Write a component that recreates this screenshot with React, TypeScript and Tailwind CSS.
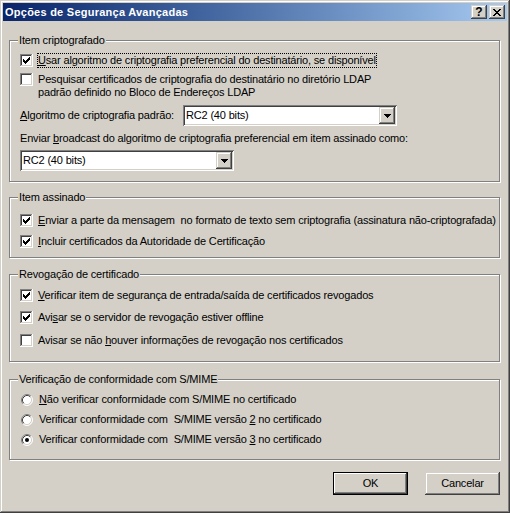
import React from "react";

function CheckBox({ checked }: { checked?: boolean }) {
  return (
    <svg width="13" height="13" viewBox="0 0 13 13" shapeRendering="crispEdges" className="shrink-0">
      <rect width="13" height="13" fill="#fff" />
      <rect width="12" height="1" fill="#808080" />
      <rect width="1" height="12" fill="#808080" />
      <rect x="1" y="1" width="10" height="1" fill="#404040" />
      <rect x="1" y="1" width="1" height="10" fill="#404040" />
      <rect x="1" y="11" width="11" height="1" fill="#d4d0c8" />
      <rect x="11" y="1" width="1" height="11" fill="#d4d0c8" />
      {checked &&
        [5, 6, 7, 6, 5, 4, 3].map((y, i) => (
          <rect key={i} x={3 + i} y={y} width="1" height="3" fill="#000" />
        ))}
    </svg>
  );
}

function Radio({ checked }: { checked?: boolean }) {
  return (
    <svg width="12" height="12" viewBox="0 0 12 12" className="shrink-0">
      <circle cx="6" cy="6" r="5" fill="#fff" />
      <path d="M2.11 9.89 A5.5 5.5 0 0 1 9.89 2.11" stroke="#808080" fill="none" />
      <path d="M9.89 2.11 A5.5 5.5 0 0 1 2.11 9.89" stroke="#fff" fill="none" />
      <path d="M2.82 9.18 A4.5 4.5 0 0 1 9.18 2.82" stroke="#404040" fill="none" />
      <path d="M9.18 2.82 A4.5 4.5 0 0 1 2.82 9.18" stroke="#d4d0c8" fill="none" />
      {checked && <circle cx="6" cy="6" r="2" fill="#000" />}
    </svg>
  );
}

function Select({ value }: { value: string }) {
  return (
    <div className="flex h-[21px] w-[214px] items-center bg-white p-[2px] shadow-[inset_1px_1px_0_#808080,inset_-1px_-1px_0_#fff,inset_2px_2px_0_#404040,inset_-2px_-2px_0_#d4d0c8]">
      <span className="flex-1 pl-[1px] leading-[13px]">{value}</span>
      <div className="flex h-[17px] w-[16px] items-center justify-center bg-[#d4d0c8] shadow-[inset_-1px_-1px_0_#404040,inset_1px_1px_0_#d4d0c8,inset_-2px_-2px_0_#808080,inset_2px_2px_0_#fff]">
        <svg width="7" height="4" viewBox="0 0 7 4" shapeRendering="crispEdges">
          <rect x="0" y="0" width="7" height="1" fill="#000" />
          <rect x="1" y="1" width="5" height="1" fill="#000" />
          <rect x="2" y="2" width="3" height="1" fill="#000" />
          <rect x="3" y="3" width="1" height="1" fill="#000" />
        </svg>
      </div>
    </div>
  );
}

function Group({ title, className, children }: { title: string; className: string; children: React.ReactNode }) {
  return (
    <div className={`flex flex-col border border-[#808080] shadow-[inset_1px_1px_0_#fff,1px_1px_0_#fff] ${className}`}>
      <div className="-mt-[8px] ml-[8px] w-fit bg-[#d4d0c8] px-[1px] leading-[14px]">{title}</div>
      {children}
    </div>
  );
}

function CheckRow({ checked, focus, className, children }: { checked?: boolean; focus?: boolean; className: string; children: React.ReactNode }) {
  return (
    <div className={`flex h-[17px] items-center pl-[10px] ${className}`}>
      <CheckBox checked={checked} />
      <span className={`ml-[4px] whitespace-nowrap border leading-[13px] ${focus ? "border-dotted border-black" : "border-transparent"}`}>{children}</span>
    </div>
  );
}

function RadioRow({ checked, className, children }: { checked?: boolean; className: string; children: React.ReactNode }) {
  return (
    <div className={`flex h-[17px] items-center pl-[11px] ${className}`}>
      <Radio checked={checked} />
      <span className="ml-[5px] whitespace-nowrap border border-transparent leading-[13px]">{children}</span>
    </div>
  );
}

const closeRows = [
  [0, 1, 6, 7],
  [1, 2, 5, 6],
  [2, 3, 4, 5],
  [3, 4],
  [2, 3, 4, 5],
  [1, 2, 5, 6],
  [0, 1, 6, 7],
];

function CaptionButton({ children }: { children: React.ReactNode }) {
  return (
    <div className="flex h-[14px] w-[16px] items-center justify-center bg-[#d4d0c8] text-[12px] font-bold leading-[12px] tracking-normal text-black shadow-[inset_-1px_-1px_0_#404040,inset_1px_1px_0_#d4d0c8,inset_-2px_-2px_0_#808080,inset_2px_2px_0_#fff]">
      {children}
    </div>
  );
}

function Button({ def, children }: { def?: boolean; children: React.ReactNode }) {
  return (
    <div
      className={`flex h-[23px] w-[75px] items-center justify-center bg-[#d4d0c8] ${
        def
          ? "shadow-[inset_0_0_0_1px_#000,inset_-2px_-2px_0_#404040,inset_2px_2px_0_#fff,inset_-3px_-3px_0_#808080]"
          : "shadow-[inset_-1px_-1px_0_#404040,inset_1px_1px_0_#d4d0c8,inset_-2px_-2px_0_#808080,inset_2px_2px_0_#fff]"
      }`}
    >
      {children}
    </div>
  );
}

export default function App() {
  return (
    <div className="flex h-[513px] w-[510px] flex-col bg-[#d4d0c8] p-[3px] font-['Liberation_Sans',Arial,sans-serif] text-[11px] tracking-[-0.17px] text-black shadow-[inset_-1px_-1px_0_#404040,inset_1px_1px_0_#d4d0c8,inset_-2px_-2px_0_#808080,inset_2px_2px_0_#fff]">
      <div className="flex h-[18px] items-center bg-gradient-to-r from-[#0a246a] to-[#a6caf0] pl-[2px] pr-[2px]">
        <span className="flex-1 text-[11px] font-bold tracking-[0.25px] text-white">Opções de Segurança Avançadas</span>
        <div className="flex gap-[2px]">
          <CaptionButton>?</CaptionButton>
          <CaptionButton>
            <svg width="8" height="7" viewBox="0 0 8 7" shapeRendering="crispEdges">
              {closeRows.map((xs, y) => xs.map((x) => <rect key={`${x}-${y}`} x={x} y={y} width="1" height="1" fill="#000" />))}
            </svg>
          </CaptionButton>
        </div>
      </div>

      <div className="flex flex-col pl-[6px] pr-[7px]">
        <Group title="Item criptografado" className="mt-[19px] h-[142px]">
          <CheckRow checked focus className="mt-[5px]">
            <u>U</u>sar algoritmo de criptografia preferencial do destinatário, se disponível
          </CheckRow>
          <div className="mt-[3px] flex items-start pl-[10px]">
            <div className="mt-[1px]">
              <CheckBox />
            </div>
            <span className="ml-[4px] whitespace-nowrap border border-transparent leading-[13px]">
              Pesquisar certificados de criptografia do destinatário no diretório LDAP
              <br />
              padrão definido no Bloco de Endereços LDAP
            </span>
          </div>
          <div className="mt-[5px] flex h-[21px] items-center pl-[10px]">
            <span className="w-[163px]">
              <u>A</u>lgoritmo de criptografia padrão:
            </span>
            <Select value="RC2 (40 bits)" />
          </div>
          <div className="mt-[6px] whitespace-nowrap pl-[10px] leading-[13px]">
            Enviar <u>b</u>roadcast do algoritmo de criptografia preferencial em item assinado como:
          </div>
          <div className="mt-[5px] pl-[10px]">
            <Select value="RC2 (40 bits)" />
          </div>
        </Group>

        <Group title="Item assinado" className="mt-[15px] h-[61px]">
          <CheckRow checked className="mt-[8px]">
            <u>E</u>nviar a parte da mensagem&nbsp; no formato de texto sem criptografia (assinatura não-criptografada)
          </CheckRow>
          <CheckRow checked className="mt-[4px]">
            <u>I</u>ncluir certificados da Autoridade de Certificação
          </CheckRow>
        </Group>

        <Group title="Revogação de certificado" className="mt-[16px] h-[88px]">
          <CheckRow checked className="mt-[6px]">
            <u>V</u>erificar item de segurança de entrada/saída de certificados revogados
          </CheckRow>
          <CheckRow checked className="mt-[5px]">
            Avi<u>s</u>ar se o servidor de revogação estiver offline
          </CheckRow>
          <CheckRow className="mt-[6px]">
            Avisar se não <u>h</u>ouver informações de revogação nos certificados
          </CheckRow>
        </Group>

        <Group title="Verificação de conformidade com S/MIME" className="mt-[17px] h-[81px]">
          <RadioRow className="mt-[5px]">
            <u>N</u>ão verificar conformidade com S/MIME no certificado
          </RadioRow>
          <RadioRow className="mt-[3px]">
            Verificar conformidade com&nbsp; S/MIME versão <u>2</u> no certificado
          </RadioRow>
          <RadioRow checked className="mt-[3px]">
            Verificar conformidade com&nbsp; S/MIME versão <u>3</u> no certificado
          </RadioRow>
        </Group>

        <div className="mt-[12px] flex justify-end gap-[17px]">
          <Button def>OK</Button>
          <Button>Cancelar</Button>
        </div>
      </div>
    </div>
  );
}
